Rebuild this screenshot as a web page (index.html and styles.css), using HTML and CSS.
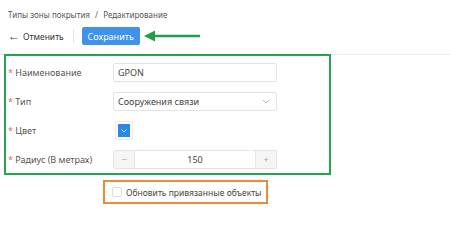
FILE: index.html
```html
<!DOCTYPE html>
<html lang="ru">
<head>
<meta charset="utf-8">
<title>Редактирование</title>
<link rel="stylesheet" href="styles.css">
</head>
<body>
<div class="header">
    <div class="crumbs">Типы зоны покрытия <span class="sep">/</span> Редактирование</div>
    <div class="toolbar">
        <span class="back">&larr;</span>
        <span class="cancel">Отменить</span>
        <span class="divider"></span>
        <button type="button" class="save">Сохранить</button>
        <svg class="arrow" width="58" height="12" viewBox="0 0 58 12">
            <path d="M1 6 L12 0.5 L12 4.7 L57 4.7 L57 7.3 L12 7.3 L12 11.5 Z" fill="#1f9e4b"/>
        </svg>
    </div>
</div>
<form class="form">
    <div class="row">
        <label class="label"><i>*</i> Наименование</label>
        <div class="input">GPON</div>
    </div>
    <div class="row">
        <label class="label"><i>*</i> Тип</label>
        <div class="input select">
            <span>Сооружения связи</span>
            <svg width="8" height="5" viewBox="0 0 8 5"><path d="M1 1 L4 4 L7 1" fill="none" stroke="#bbb" stroke-width="1"/></svg>
        </div>
    </div>
    <div class="row">
        <label class="label"><i>*</i> Цвет</label>
        <div class="color"><span class="swatch"><svg width="6" height="4" viewBox="0 0 6 4"><path d="M0.5 0.5 L3 3 L5.5 0.5" fill="none" stroke="#cfe4fb" stroke-width="0.9"/></svg></span></div>
    </div>
    <div class="row">
        <label class="label"><i>*</i> Радиус (В метрах)</label>
        <div class="input number">
            <span class="step">&minus;</span>
            <span class="value">150</span>
            <span class="step">+</span>
        </div>
    </div>
</form>
<div class="update">
    <span class="box"></span>
    <span>Обновить привязанные объекты</span>
</div>
</body>
</html>
```

FILE: styles.css
```css
body {
    margin: 0;
    font-family: "Noto Sans", "Open Sans", sans-serif;
    font-size: 9px;
    color: #333;
    background: #fff;
}
.header {
    border-bottom: 1px solid #ececec;
}
.crumbs {
    padding: 8px 0 0 8px;
    height: 14px;
    line-height: 14px;
    font-size: 8px;
    color: #555;
}
.crumbs .sep {
    margin: 0 3px;
}
.toolbar {
    display: flex;
    align-items: center;
    height: 18px;
    padding: 5px 0 9px 8px;
}
.back {
    font-size: 12px;
    line-height: 12px;
    color: #444;
    width: 15px;
}
.cancel {
    color: #333;
    font-size: 8.5px;
}
.divider {
    width: 1px;
    height: 14px;
    background: #e6e6e6;
    margin: 0 8px 0 9px;
}
.save {
    font-family: inherit;
    font-size: 9px;
    color: #fff;
    background: #3f93ea;
    border: 0;
    border-radius: 2px;
    width: 58px;
    height: 18px;
    padding: 0;
}
.arrow {
    margin-left: 3px;
}
.form {
    width: 321px;
    margin: -1px 0 0 4px;
    border: 2px solid #22a452;
    padding: 7px 0 4px 2px;
}
.row {
    display: flex;
    align-items: center;
    height: 19px;
    margin-bottom: 10px;
}
.row:last-child {
    margin-bottom: 0;
}
.label {
    width: 105px;
    color: #555;
}
.label i {
    font-style: normal;
    color: #e06a6a;
}
.input {
    box-sizing: border-box;
    width: 164px;
    height: 19px;
    border: 1px solid #e3e3e3;
    border-radius: 2px;
    padding: 0 4px;
    display: flex;
    align-items: center;
    color: #444;
}
.select {
    justify-content: space-between;
    padding-right: 6px;
}
.color {
    box-sizing: border-box;
    width: 18px;
    height: 19px;
    border: 1px solid #ececec;
    border-radius: 2px;
    display: flex;
    align-items: center;
    justify-content: center;
    margin-left: 2px;
}
.swatch {
    width: 12px;
    height: 13px;
    background: #2a88e8;
    display: flex;
    align-items: center;
    justify-content: center;
}
.number {
    padding: 0;
}
.step {
    width: 20px;
    height: 100%;
    background: #f5f5f5;
    color: #aaa;
    display: flex;
    align-items: center;
    justify-content: center;
}
.step:first-child {
    border-right: 1px solid #e6e6e6;
}
.step:last-child {
    border-left: 1px solid #e6e6e6;
}
.value {
    flex: 1;
    text-align: center;
}
.update {
    box-sizing: border-box;
    width: 165px;
    height: 24px;
    margin: 5px 0 0 103px;
    border: 2px solid #ef8936;
    display: flex;
    align-items: center;
    padding-left: 7px;
    color: #444;
    font-size: 8.5px;
    white-space: nowrap;
}
.box {
    flex: none;
    width: 8px;
    height: 8px;
    border: 1px solid #ddd;
    border-radius: 2px;
    margin-right: 4px;
}
```
